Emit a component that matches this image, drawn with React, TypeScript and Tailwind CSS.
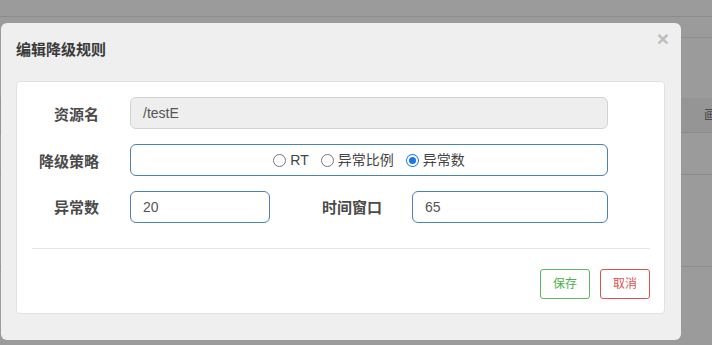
import React from "react";

const font = "font-['Liberation_Sans','Noto_Sans_CJK_SC',sans-serif]";

function Radio({ checked, label }: { checked?: boolean; label: string }) {
  return (
    <span className="flex items-center gap-[4px]">
      {checked ? (
        <span className="w-[13px] h-[13px] rounded-full bg-[#1a73e8] flex items-center justify-center">
          <span className="w-[11px] h-[11px] rounded-full bg-white flex items-center justify-center">
            <span className="w-[7px] h-[7px] rounded-full bg-[#1a73e8]" />
          </span>
        </span>
      ) : (
        <span className="w-[13px] h-[13px] rounded-full border border-[#767676] bg-white" />
      )}
      <span className="text-[14px] text-[#444] leading-none">{label}</span>
    </span>
  );
}

export default function App() {
  return (
    <div className={`relative w-[712px] h-[345px] bg-[#9b9b9b] overflow-hidden ${font}`}>
      {/* background page behind overlay */}
      <div className="flex flex-col">
        <div className="h-[16px]" />
        <div className="h-px bg-[#8c8c8c]" />
        <div className="h-[20px]" />
        <div className="h-px bg-[#8e8e8e]" />
        <div className="h-[60px]" />
        <div className="h-[34px] bg-[#959595] flex items-center pl-[704px] text-[13px] text-[#4a4a4a] whitespace-nowrap overflow-hidden">画</div>
        <div className="h-px bg-[#8c8c8c]" />
        <div className="h-[41px]" />
        <div className="h-px bg-[#8c8c8c]" />
        <div className="h-[91px]" />
        <div className="h-px bg-[#8c8c8c]" />
      </div>

      {/* modal */}
      <div className="absolute left-[1px] top-[23px] w-[680px] h-[317px] bg-[#efefef] rounded-[6px] flex flex-col">
        <div className="relative h-[58px] pl-[15px] pt-[17px]">
          <div className="text-[15px] leading-[20px] font-bold text-[#3a3a3a]">编辑降级规则</div>
          <span className="absolute right-[12px] top-[4px] text-[21px] leading-[24px] font-bold text-[#bdbdbd]">×</span>
        </div>

        <div className="ml-[15px] w-[649px] h-[233px] bg-white rounded-[4px] border border-[#e2e2e2] pt-[15px] flex flex-col">
          <div className="flex flex-col gap-[15px]">
            <div className="flex items-center h-[32px]">
              <div className="w-[113px] pr-[31px] pt-[4px] text-right text-[15px] font-bold text-[#4a4a4a]">资源名</div>
              <div className="w-[478px] h-[32px] rounded-[6px] border border-[#d2d2d2] bg-[#eeeeee] pl-[12px] flex items-center text-[14px] text-[#555]">/testE</div>
            </div>
            <div className="flex items-center h-[32px]">
              <div className="w-[113px] pr-[31px] pt-[4px] text-right text-[15px] font-bold text-[#4a4a4a]">降级策略</div>
              <div className="w-[478px] h-[32px] rounded-[6px] border border-[#4a80b9] bg-white flex items-center justify-center gap-[12px]">
                <Radio label="RT" />
                <Radio label="异常比例" />
                <Radio checked label="异常数" />
              </div>
            </div>
            <div className="flex items-center h-[32px]">
              <div className="w-[113px] pr-[31px] pt-[3px] text-right text-[15px] font-bold text-[#4a4a4a]">异常数</div>
              <div className="w-[140px] h-[32px] rounded-[6px] border border-[#4a80b9] bg-white pl-[12px] flex items-center text-[14px] text-[#555]">20</div>
              <div className="w-[142px] pr-[30px] pt-[3px] text-right text-[15px] font-bold text-[#4a4a4a]">时间窗口</div>
              <div className="w-[196px] h-[32px] rounded-[6px] border border-[#4a80b9] bg-white pl-[12px] flex items-center text-[14px] text-[#555]">65</div>
            </div>
          </div>

          <div className="ml-[15px] mt-[25px] w-[618px] h-px bg-[#e5e5e5]" />

          <div className="mt-[20px] pr-[14px] flex justify-end gap-[10px]">
            <button className="w-[50px] h-[30px] rounded-[3px] border border-[#5cb85c] bg-white text-[12px] text-[#4cae4c]">保存</button>
            <button className="w-[50px] h-[30px] rounded-[3px] border border-[#d9534f] bg-white text-[12px] text-[#d9534f]">取消</button>
          </div>
        </div>
      </div>
    </div>
  );
}
